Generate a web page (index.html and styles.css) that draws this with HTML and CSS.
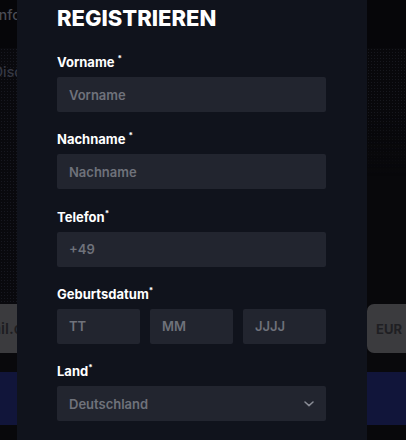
FILE: index.html
```html
<!DOCTYPE html>
<html lang="de">
<head>
<meta charset="utf-8">
<title>Registrieren</title>
<link rel="stylesheet" href="styles.css">
</head>
<body>
<div class="page">
  <aside class="side side-left">
    <div class="bg-top"><span class="bg-text">Info</span></div>
    <div class="bg-dots">
      <span class="bg-text dim">Disc</span>
    </div>
    <div class="bg-gray"><span class="gray-text">mail.com</span></div>
    <div class="bg-gap"></div>
    <div class="bg-blue"></div>
  </aside>

  <main class="modal">
    <h1 class="title">REGISTRIEREN</h1>
    <form class="form">
      <div class="field">
        <label class="label">Vorname <sup class="req">*</sup></label>
        <input class="input" type="text" placeholder="Vorname">
      </div>
      <div class="field">
        <label class="label">Nachname <sup class="req">*</sup></label>
        <input class="input" type="text" placeholder="Nachname">
      </div>
      <div class="field">
        <label class="label">Telefon<sup class="req">*</sup></label>
        <input class="input" type="text" placeholder="+49">
      </div>
      <div class="field">
        <label class="label">Geburtsdatum<sup class="req">*</sup></label>
        <div class="date-row">
          <input class="input" type="text" placeholder="TT">
          <input class="input" type="text" placeholder="MM">
          <input class="input" type="text" placeholder="JJJJ">
        </div>
      </div>
      <div class="field">
        <label class="label">Land<sup class="req">*</sup></label>
        <div class="input select">
          <span class="select-value">Deutschland</span>
          <svg class="chevron" width="10" height="6" viewBox="0 0 10 6" aria-hidden="true">
            <path d="M1 1 L5 4.6 L9 1" fill="none" stroke="#8a8d96" stroke-width="1.5" stroke-linecap="round" stroke-linejoin="round"/>
          </svg>
        </div>
      </div>
    </form>
  </main>

  <aside class="side side-right">
    <div class="bg-top"></div>
    <div class="bg-dots fade"></div>
    <div class="bg-gray rounded"><span class="gray-text eur">EUR</span></div>
    <div class="bg-gap"></div>
    <div class="bg-blue"></div>
  </aside>
</div>
</body>
</html>
```

FILE: styles.css
```css
* { box-sizing: border-box; }

html, body {
  margin: 0;
  padding: 0;
  background: #08080b;
  font-family: Inter, "Noto Sans", "DejaVu Sans", sans-serif;
}

.page {
  display: grid;
  grid-template-columns: 17px 350px 1fr;
  height: 440px;
  overflow: hidden;
}

.side {
  display: flex;
  flex-direction: column;
  overflow: hidden;
  background: #08080b;
}

.bg-top {
  height: 48px;
  background: #060609;
  display: flex;
  align-items: flex-start;
  padding-top: 6px;
}

.bg-text {
  font-size: 14px;
  font-weight: 500;
  color: #4a4c55;
  white-space: nowrap;
  margin-left: -5px;
  line-height: 18px;
}

.bg-text.dim {
  color: #353844;
  margin-left: -7px;
}

.bg-dots {
  height: 256px;
  padding-top: 13px;
  background-color: #09090d;
  background-image: radial-gradient(circle, rgba(90, 95, 120, 0.18) 0.6px, transparent 0.9px);
  background-size: 3px 3px;
}

.bg-dots.fade {
  background-color: #08080b;
  -webkit-mask-image: linear-gradient(to bottom, #000 0%, #000 25%, transparent 50%);
  mask-image: linear-gradient(to bottom, #000 0%, #000 25%, transparent 50%);
}

.bg-gray {
  height: 49px;
  background: #3b3b3e;
  display: flex;
  align-items: center;
}

.bg-gray.rounded {
  border-radius: 7px 0 0 7px;
}

.gray-text {
  font-size: 15px;
  font-weight: 600;
  color: #1d1d21;
  white-space: nowrap;
  margin-left: -21px;
}

.gray-text.eur {
  margin-left: 9px;
  font-size: 13px;
  font-weight: 700;
  color: #1f1f23;
}

.bg-gap {
  height: 19px;
  background: #09090c;
}

.bg-blue {
  height: 53px;
  background: #11153a;
}

.modal {
  background: #10131c;
  padding: 4px 41px 0 40px;
  height: 440px;
}

.title {
  margin: 0;
  color: #ffffff;
  font-size: 22px;
  font-weight: 800;
  line-height: 28px;
  letter-spacing: 0;
}

.form {
  display: flex;
  flex-direction: column;
  gap: 19.3px;
  margin-top: 22px;
}

.field {
  display: flex;
  flex-direction: column;
  gap: 7px;
}

.label {
  color: #ffffff;
  font-size: 13px;
  font-weight: 700;
  line-height: 16px;
  display: block;
}

.req {
  font-size: 8px;
  line-height: 0;
  vertical-align: 6px;
  font-weight: 700;
}

.input {
  display: flex;
  align-items: center;
  width: 100%;
  height: 35px;
  border: none;
  outline: none;
  border-radius: 2px;
  background: #22252f;
  padding: 0 12px;
  font-family: Inter, "Noto Sans", sans-serif;
  font-size: 13px;
  font-weight: 600;
  color: #ffffff;
}

.input::placeholder {
  color: #6f727b;
  opacity: 1;
}

.date-row {
  display: grid;
  grid-template-columns: 1fr 1fr 1fr;
  gap: 10px;
}

.select {
  justify-content: space-between;
  padding-right: 12px;
}

.select-value {
  color: #6f727b;
}

.chevron {
  display: block;
}
```
